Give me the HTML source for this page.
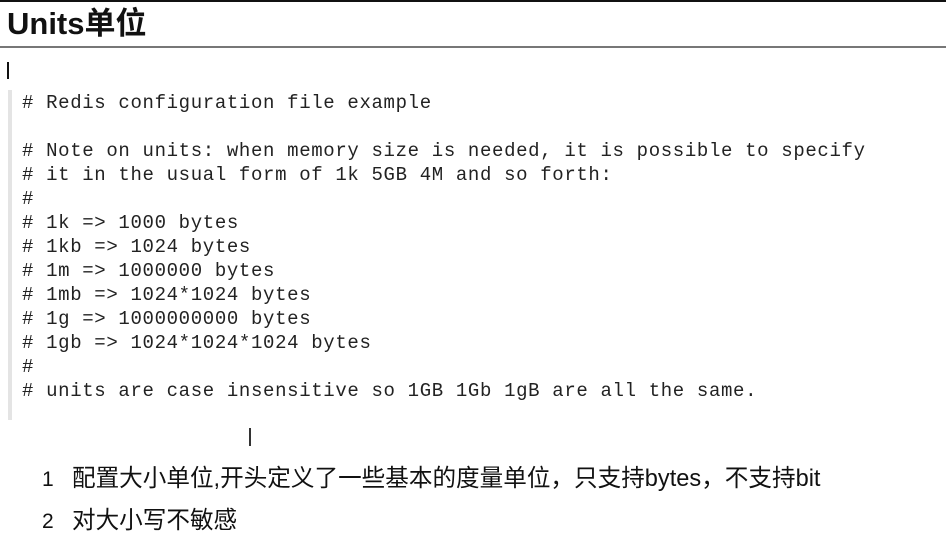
<!DOCTYPE html>
<html><head><meta charset="utf-8"><style>
body{margin:0;width:946px;height:541px;background:#fff;position:relative;overflow:hidden;font-family:"Liberation Sans","Noto Sans CJK SC",sans-serif}
.top{position:absolute;left:0;top:0;width:946px;height:2px;background:#111}
h1{position:absolute;left:7px;top:4px;margin:0;font-size:31px;font-weight:bold;color:#111;line-height:40px}
.rule{position:absolute;left:0;top:46px;width:946px;height:2px;background:#777}
.caret{position:absolute;left:7px;top:62px;width:2px;height:17px;background:#111}
.gut{position:absolute;left:8px;top:90px;width:4px;height:330px;background:#e4e4e4}
pre{position:absolute;left:22px;top:91px;margin:0;font-family:"Liberation Mono",monospace;font-size:19px;letter-spacing:0.65px;line-height:24px;color:#222}
.li{position:absolute;left:42px;font-size:23.6px;color:#111;line-height:26px}
.li b{font-weight:normal;font-size:21px}
.li span{position:absolute;left:30px;white-space:nowrap}
.ib{position:absolute;left:249px;top:428px;width:2px;height:18px;background:#333}
</style></head><body>
<div class="top"></div>
<h1>Units单位</h1>
<div class="rule"></div>
<div class="caret"></div>
<div class="gut"></div>
<pre># Redis configuration file example

# Note on units: when memory size is needed, it is possible to specify
# it in the usual form of 1k 5GB 4M and so forth:
#
# 1k => 1000 bytes
# 1kb => 1024 bytes
# 1m => 1000000 bytes
# 1mb => 1024*1024 bytes
# 1g => 1000000000 bytes
# 1gb => 1024*1024*1024 bytes
#
# units are case insensitive so 1GB 1Gb 1gB are all the same.
</pre>
<div class="ib"></div>
<div class="li" style="top:466px"><b>1</b><span>配置大小单位,开头定义了一些基本的度量单位，只支持bytes，不支持bit</span></div>
<div class="li" style="top:508px"><b>2</b><span>对大小写不敏感</span></div>
</body></html>
